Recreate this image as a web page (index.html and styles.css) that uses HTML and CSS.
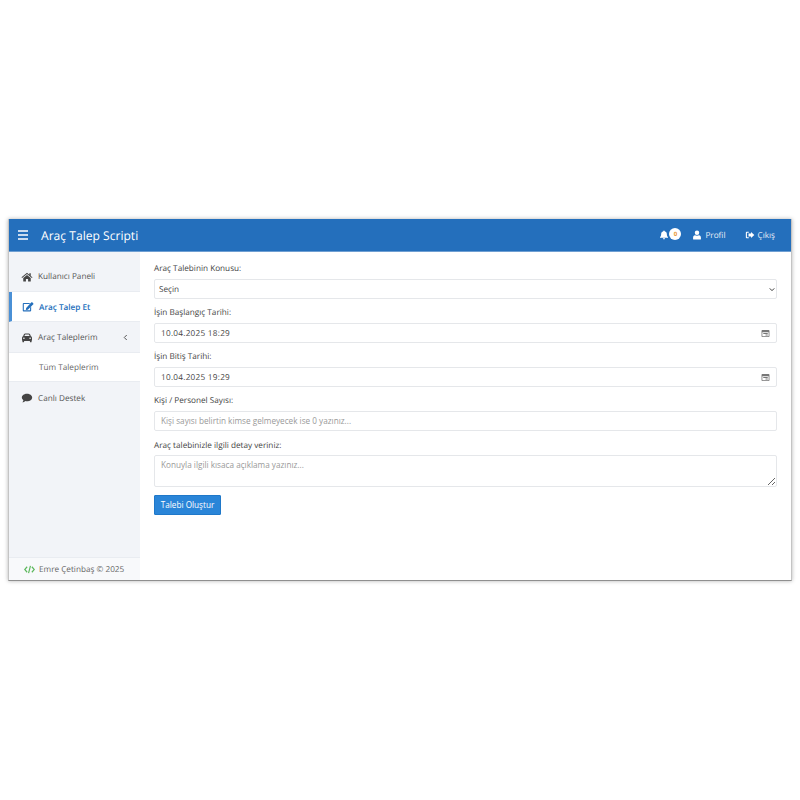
FILE: index.html
```html
<!DOCTYPE html>
<html lang="tr">
<head>
    <meta charset="UTF-8">
    <meta name="viewport" content="width=device-width, initial-scale=1.0">
    <title>Araç Talep Scripti</title>
    <link rel="stylesheet" href="styles.css">
</head>
<body>
    <div class="window">
        <header class="topbar">
            <svg class="menu-icon" viewBox="0 0 12 10"><path d="M1 1h10M1 5h10M1 9h10"/></svg>
            <span class="brand">Araç Talep Scripti</span>
            <nav class="top-nav">
                <span class="bell">
                    <svg class="top-icon" viewBox="0 0 12 12"><path d="M6 .5c.5 0 .8.4.8.9 1.700.4 2.600 1.700 2.600 3.300 0 2.300.7 3 1.400 3.800v.8H1.200v-.8C1.900 7.700 2.600 7 2.600 4.700c0-1.600.9-2.900 2.600-3.300 0-.5.3-.9.800-.9zM4.700 10h2.600c0 .8-.6 1.400-1.300 1.400S4.700 10.800 4.700 10z"/></svg>
                    <span class="badge">0</span>
                </span>
                <span class="top-link profile">
                    <svg class="top-icon" viewBox="0 0 12 12"><path d="M6 .5a2.700 2.700 0 1 1 0 5.400 2.700 2.700 0 0 1 0-5.400zM3.600 6.400C4.300 6.800 5.100 7 6 7s1.700-.2 2.400-.6c1.500.2 2.300 1.200 2.300 2.800v1.500c0 .5-.3.800-.8.800H2.100c-.5 0-.8-.3-.8-.8V9.200c0-1.600.8-2.600 2.300-2.800z"/></svg>
                    Profil
                </span>
                <span class="top-link logout">
                    <svg class="top-icon" viewBox="0 0 12 12"><path d="M4.500 2H2.300C1.600 2 1 2.600 1 3.300v5.400C1 9.400 1.600 10 2.300 10h2.200V8.700H2.600a.3.300 0 0 1-.3-.3V3.600c0-.2.100-.3.300-.3h1.900zM7.200 2.400 11.200 6l-4 3.600V7.700H4.200V4.300h3z"/></svg>
                    Çıkış
                </span>
            </nav>
        </header>
        <div class="main">
            <aside class="sidebar">
                <ul class="side-menu">
                    <li class="side-item first">
                        <svg class="side-icon" viewBox="0 0 14 12"><path d="M7 1 .4 6.400l.7.800L7 2.500l5.900 4.700.7-.8L11.500 4.700V1.500H9.800v1.800zM2.500 7.200V11c0 .3.200.5.500.5h2.700V8.300h2.600v3.200H11c.3 0 .5-.2.500-.5V7.200L7 3.600z"/></svg>
                        Kullanıcı Paneli
                    </li>
                    <li class="side-item active">
                        <svg class="side-icon" viewBox="0 0 14 12"><path d="M9.500 7v3H2V2.500h6.500L9.700 1.300H1.800C1.100 1.300.7 1.800.7 2.400v7.900c0 .6.400 1.100 1.100 1.100h7.900c.6 0 1.100-.5 1.100-1.100V5.800zM12.100.4l1.300 1.300c.3.300.3.700 0 1L6.800 9.200l-2.400.4.400-2.400L11.100.4c.3-.3.700-.3 1 0z"/></svg>
                        Araç Talep Et
                    </li>
                    <li class="side-item">
                        <svg class="side-icon" viewBox="0 0 14 12"><path d="M3.300 1.500C3.600.8 4.200.5 4.900.5h4.200c.7 0 1.300.3 1.600 1l1 2.500c.8.300 1.300 1 1.300 1.900v2.600c0 .4-.2.700-.5.900v1.100c0 .4-.3.700-.7.700h-.6c-.4 0-.7-.3-.7-.7v-.8H3.500v.8c0 .4-.3.700-.7.700h-.6c-.4 0-.7-.3-.7-.7V9.400c-.3-.2-.5-.5-.5-.9V5.900C1 5 1.500 4.300 2.300 4zM3.900 3.700h6.200l-.7-1.700c-.1-.2-.3-.3-.5-.3H5.100c-.2 0-.4.100-.5.300zM3.300 5.300a1 1 0 1 0 0 2 1 1 0 0 0 0-2zm7.400 0a1 1 0 1 0 0 2 1 1 0 0 0 0-2z"/></svg>
                        Araç Taleplerim
                        <svg class="chevron" viewBox="0 0 6 8"><path d="M4.500 1 1.500 4l3 3"/></svg>
                    </li>
                    <li class="side-sub">Tüm Taleplerim</li>
                    <li class="side-item last">
                        <svg class="side-icon" viewBox="0 0 14 12"><path d="M7 .8c3.400 0 6.200 2 6.200 4.600S10.400 10 7 10c-.7 0-1.400-.1-2-.3-.9.800-2.200 1.500-3.700 1.500.7-.7 1.300-1.700 1.400-2.600C1.600 7.800.8 6.700.8 5.400.8 2.800 3.600.8 7 .8z"/></svg>
                        Canlı Destek
                    </li>
                </ul>
                <footer class="side-footer">
                    <svg class="code-icon" viewBox="0 0 14 10"><path d="M4 1.500.9 5 4 8.500M10 1.500 13.100 5 10 8.500M8.200.5 5.800 9.500"/></svg>
                    Emre Çetinbaş © 2025
                </footer>
            </aside>
            <main class="content">
                <form>
                    <label class="field-label">Araç Talebinin Konusu:</label>
                    <div class="field select-field">
                        <span>Seçin</span>
                        <svg class="select-arrow" viewBox="0 0 8 6"><path d="M1 1.500 4 4.500l3-3"/></svg>
                    </div>
                    <label class="field-label">İşin Başlangıç Tarihi:</label>
                    <div class="field date-field">
                        <span>10.04.2025 18:29</span>
                        <svg class="date-icon" viewBox="0 0 10 10"><path d="M1.500 1h7c.5 0 .9.400.9.900v6.200c0 .5-.4.900-.9.900h-7c-.5 0-.9-.4-.9-.9V1.900c0-.5.400-.9.900-.9zm0 2.500v4.600h7V3.500zM2.500 4.500h5v1h-5zM5 6.200h2.500v1H5z"/></svg>
                    </div>
                    <label class="field-label">İşin Bitiş Tarihi:</label>
                    <div class="field date-field">
                        <span>10.04.2025 19:29</span>
                        <svg class="date-icon" viewBox="0 0 10 10"><path d="M1.500 1h7c.5 0 .9.400.9.900v6.200c0 .5-.4.900-.9.900h-7c-.5 0-.9-.4-.9-.9V1.900c0-.5.400-.9.900-.9zm0 2.500v4.600h7V3.500zM2.500 4.500h5v1h-5zM5 6.200h2.500v1H5z"/></svg>
                    </div>
                    <label class="field-label">Kişi / Personel Sayısı:</label>
                    <input class="field text-field" type="text" placeholder="Kişi sayısı belirtin kimse gelmeyecek ise 0 yazınız...">
                    <label class="field-label detail-label">Araç talebinizle ilgili detay veriniz:</label>
                    <textarea class="field area-field" placeholder="Konuyla ilgili kısaca açıklama yazınız..."></textarea>
                    <button class="submit-button" type="button">Talebi Oluştur</button>
                </form>
            </main>
        </div>
    </div>
</body>
</html>
```

FILE: styles.css
```css
* {
    box-sizing: border-box;
}
body {
    margin: 0;
    min-height: 100vh;
    display: flex;
    align-items: center;
    justify-content: center;
    background: #fff;
    font-family: "Open Sans", "Noto Sans", sans-serif;
    font-size: 8.2px;
    text-rendering: geometricPrecision;
    color: #444;
}
.window {
    width: 784px;
    height: 362px;
    display: flex;
    flex-direction: column;
    border-right: 1px solid #c4c4c4;
    border-bottom: 1px solid #8f8f8f;
    border-left: 1px solid #c4c4c4;
    box-shadow: 0 0 4px rgba(0, 0, 0, 0.3);
}
.topbar {
    height: 33px;
    flex: none;
    display: flex;
    align-items: center;
    padding: 0 16px 0 8px;
    background-color: #246fbc;
    border-bottom: 1px solid #6f9fd2;
    color: #fff;
}
.menu-icon {
    width: 12px;
    height: 10px;
    fill: none;
    stroke: #fff;
    stroke-width: 1.4;
}
.brand {
    margin-left: 12px;
    font-size: 12.1px;
    font-weight: 500;
}
.top-nav {
    margin-left: auto;
    display: flex;
    align-items: center;
}
.top-icon {
    width: 10px;
    height: 10px;
    fill: #fff;
}
.bell {
    display: flex;
    align-items: center;
}
.badge {
    width: 12px;
    height: 12px;
    margin: -3px 0 0 0;
    border-radius: 50%;
    background: #fff;
    color: #e8962e;
    font-size: 6px;
    font-weight: 700;
    line-height: 12px;
    text-align: center;
}
.top-link {
    display: flex;
    align-items: center;
    gap: 3px;
    color: #e6eef7;
}
.top-link.profile {
    margin-left: 11px;
}
.top-link.logout {
    margin-left: 19px;
}
.main {
    flex: 1;
    display: flex;
    min-height: 0;
}
.sidebar {
    width: 131px;
    flex: none;
    display: flex;
    flex-direction: column;
    background-color: #f2f4f8;
}
.side-menu {
    flex: 1;
    margin: 0;
    padding: 0;
    list-style: none;
}
.side-item {
    display: flex;
    align-items: center;
    height: 31px;
    padding: 1px 12px 0;
    border-bottom: 1px solid #e9ecf1;
    color: #555;
}
.side-item.first {
    height: 40px;
    padding-top: 10px;
}
.side-item.last {
    border-bottom: none;
}
.side-item.active {
    padding-left: 10px;
    border-left: 3px solid #4a90d6;
    background: #fff;
    color: #246fbc;
    font-weight: 600;
    height: 30px;
}
.side-icon {
    width: 12px;
    height: 10px;
    margin-right: 5px;
    fill: #444;
}
.side-item.active .side-icon {
    fill: #246fbc;
}
.chevron {
    width: 5px;
    height: 7px;
    margin-left: auto;
    fill: none;
    stroke: #555;
    stroke-width: 1.2;
}
.side-sub {
    display: flex;
    align-items: center;
    height: 29px;
    padding-left: 30px;
    background: #fff;
    border-bottom: 1px solid #e9ecf1;
    color: #666;
}
.side-footer {
    height: 23px;
    flex: none;
    display: flex;
    align-items: center;
    padding-left: 15px;
    gap: 4px;
    background: #f8f9fb;
    border-top: 1px solid #e9ecf1;
    color: #666;
}
.code-icon {
    width: 11px;
    height: 9px;
    fill: none;
    stroke: #5cb85c;
    stroke-width: 1.5;
}
.content {
    flex: 1;
    padding: 8px 14px 0;
    background: #fff;
}
.field-label {
    display: block;
    height: 19px;
    line-height: 17px;
    color: #444;
}
.detail-label {
    padding-top: 1px;
}
.field {
    display: flex;
    align-items: center;
    width: 100%;
    height: 20px;
    margin-bottom: 5px;
    padding: 0 6px;
    border: 1px solid #e5e7ea;
    border-radius: 2px;
    background: #fff;
    font-family: inherit;
    font-size: 8.2px;
    color: #444;
}
.field::placeholder {
    color: #999;
    opacity: 1;
}
.select-field {
    justify-content: space-between;
    padding: 0 1px 0 4px;
}
.select-arrow {
    width: 6px;
    height: 5px;
    fill: none;
    stroke: #333;
    stroke-width: 1.3;
}
.date-field {
    justify-content: space-between;
    padding-right: 6px;
    letter-spacing: 0.27px;
}
.date-icon {
    width: 9px;
    height: 9px;
    fill: #777;
}
.text-field {
    padding-bottom: 1px;
}
.area-field {
    display: block;
    height: 32px;
    margin-bottom: 8px;
    padding: 3px 6px;
    resize: vertical;
}
.submit-button {
    display: block;
    width: 67px;
    height: 20px;
    padding: 0 0 1px;
    border: 1px solid #1f78c9;
    border-radius: 1px;
    background-color: #2a85d8;
    color: #fff;
    font-family: inherit;
    font-size: 8.2px;
    font-weight: 500;
    cursor: pointer;
}
```
